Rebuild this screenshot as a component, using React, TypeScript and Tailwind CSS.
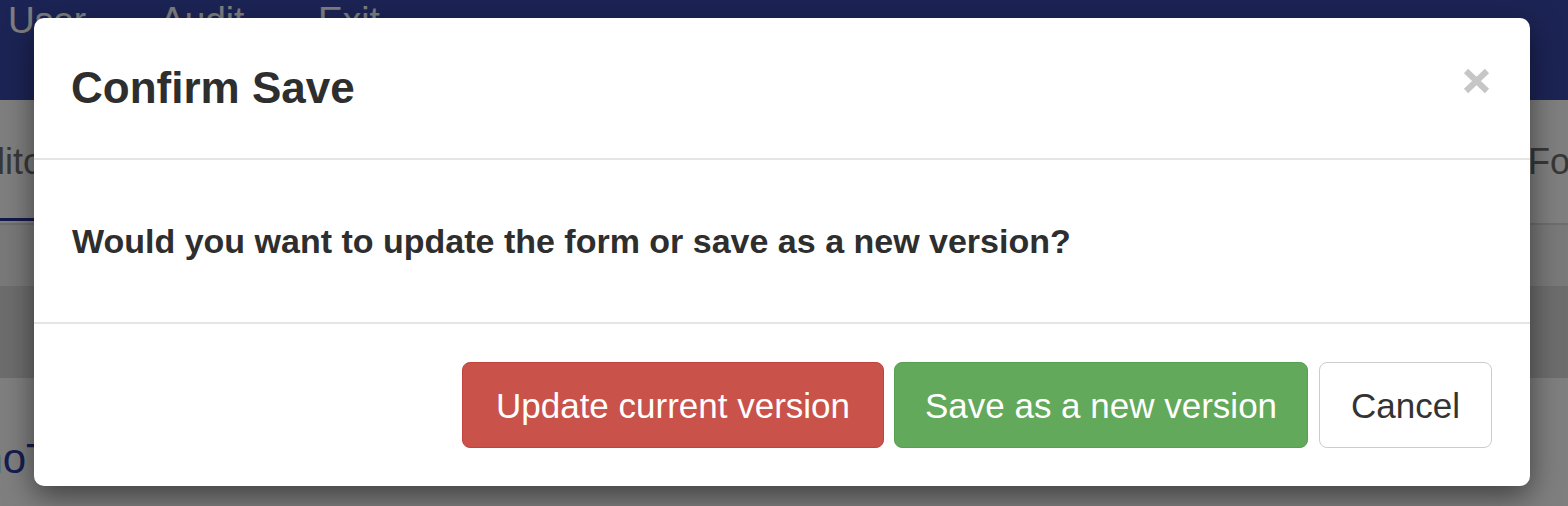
import React from "react";

export default function App() {
  return (
    <div className="relative w-[1568px] h-[506px] overflow-hidden bg-white font-['Liberation_Sans',Arial,sans-serif]">
      {/* underlying page */}
      <div className="flex flex-col">
        <nav className="h-[100px] bg-[#3949ab] flex items-start pl-[8px] pt-[2px] text-[37px] leading-none text-white">
          <span className="w-[152px]">User</span>
          <span className="w-[158px]">Audit</span>
          <span>Exit</span>
        </nav>
        <div className="h-[125px] flex items-end justify-between border-b-2 border-[#dcdcdc] overflow-hidden">
          <div className="ml-[-39px] mb-[2px] pb-[38px] border-b-[3px] border-[#283593] text-[36px] leading-none text-[#707070]">
            Editor
          </div>
          <div className="mr-[-44px] mb-[5px] pb-[38px] text-[36px] leading-none text-[#707070] whitespace-nowrap">
            Form
          </div>
        </div>
        <div className="h-[61px] bg-[#f2f2f2]"></div>
        <div className="h-[92px] bg-[#dadada]"></div>
        <div className="pt-[60px] overflow-hidden">
          <h1 className="ml-[-86px] text-[42px] leading-none text-[#2c3a9e] whitespace-nowrap">DemoTemplate</h1>
        </div>
      </div>

      {/* overlay */}
      <div className="absolute inset-0 bg-black/50"></div>

      {/* modal */}
      <div className="absolute left-[34px] top-[18px] w-[1496px] h-[468px] bg-white rounded-[10px] shadow-[0_10px_30px_rgba(0,0,0,0.5)] flex flex-col text-[#333]">
        <div className="h-[142px] flex items-center justify-between pl-[37px] pr-[40px] border-b-2 border-[#e5e5e5]">
          <h4 className="text-[44px] font-bold leading-none text-[#2e2e2e]">Confirm Save</h4>
          <button className="self-start mt-[50px]" aria-label="Close">
            <svg width="27" height="26" viewBox="0 0 27 26">
              <path d="M3 3 L24 23 M24 3 L3 23" stroke="#c6c6c6" strokeWidth="6" strokeLinecap="butt" fill="none" />
            </svg>
          </button>
        </div>
        <div className="h-[162px] flex items-center pl-[38px]">
          <p className="text-[34px] font-bold leading-none text-[#2e2e2e]">
            Would you want to update the form or save as a new version?
          </p>
        </div>
        <div className="h-[164px] flex items-center justify-end pr-[38px] border-t-2 border-[#e5e5e5]">
          <button className="w-[422px] h-[86px] rounded-[8px] border border-[#c0443d] bg-[#c9524a] text-white text-[35px] leading-none">
            Update current version
          </button>
          <button className="ml-[10px] w-[414px] h-[86px] rounded-[8px] border border-[#57a051] bg-[#62a95b] text-white text-[35px] leading-none whitespace-nowrap">
            Save as a new version
          </button>
          <button className="ml-[11px] w-[173px] h-[86px] rounded-[8px] border-[1.5px] border-[#cccccc] bg-white text-[#333] text-[35px] leading-none">
            Cancel
          </button>
        </div>
      </div>
    </div>
  );
}
